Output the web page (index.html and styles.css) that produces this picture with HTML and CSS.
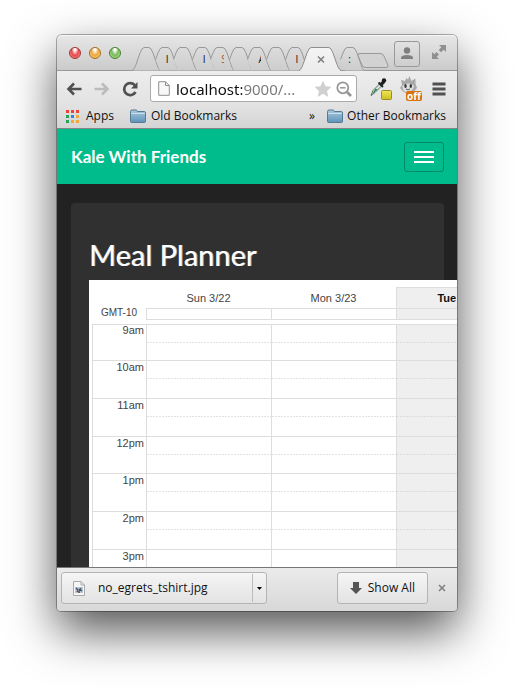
FILE: index.html
```html
<!DOCTYPE html>
<html lang="en">
<head>
<meta charset="utf-8">
<title>Kale With Friends</title>
<link rel="stylesheet" href="styles.css">
</head>
<body>
<svg class="defs" aria-hidden="true">
  <defs>
    <linearGradient id="folderFill" x1="0" y1="0" x2="0" y2="1"><stop offset="0" stop-color="#a9c9de"/><stop offset="1" stop-color="#5d93b8"/></linearGradient>
    <linearGradient id="tabFill" x1="0" y1="0" x2="0" y2="1"><stop offset="0" stop-color="#dcdcdc"/><stop offset="1" stop-color="#cdcdcd"/></linearGradient>
    <linearGradient id="yellow" x1="0" y1="0" x2="0" y2="1"><stop offset="0" stop-color="#efe75a"/><stop offset="1" stop-color="#cdbf1d"/></linearGradient>
    <linearGradient id="activeFill" x1="0" y1="0" x2="0" y2="1"><stop offset="0" stop-color="#f4f4f4"/><stop offset="1" stop-color="#ececec"/></linearGradient>
    <symbol id="tabFirst" viewBox="0 0 28 25"><path d="M0 24.500C2 24 3 21 4 18.500L8 7Q10 1.500 12 1.500H17Q19 1.500 21 7L25 18.500Q26.500 23.500 28 24.500Z" fill="url(#tabFill)"/><path d="M0 24.500C2 24 3 21 4 18.500L8 7Q10 1.500 12 1.500H17Q19 1.500 21 7L25 18.500Q26.500 23.500 28 24.500" fill="none" stroke="#999"/></symbol>
    <symbol id="tabNext" viewBox="0 0 28 25"><path d="M4.500 13.500L7 7Q9 1.500 11 1.500H17Q19 1.500 21 7L25 18.500Q26.500 23.500 28 24.500H9Z" fill="url(#tabFill)"/><path d="M4.500 13.500L7 7Q9 1.500 11 1.500H17Q19 1.500 21 7L25 18.500Q26.500 23.500 28 24.500" fill="none" stroke="#999"/></symbol>
    <symbol id="folder" viewBox="0 0 16 14"><path d="M.5 12.500V2.500Q.5 1 2 1H6Q7 1 7.300 2.500H14.500Q15.500 2.500 15.500 4V12.500Q15.500 13.500 14.500 13.500H1.500Q.5 13.500 .5 12.500Z" fill="url(#folderFill)" stroke="#547b96"/><path d="M1 4.500H15" stroke="#c8deeb"/></symbol>
  </defs>
</svg>

<div class="window">
  <header class="titlebar">
    <div class="lights">
      <button class="light red" aria-label="Close window"></button>
      <button class="light amber" aria-label="Minimise window"></button>
      <button class="light green" aria-label="Zoom window"></button>
    </div>
    <nav class="tabs" aria-label="Tabs">
      <button class="tab" aria-label="Tab 1"><svg class="shape"><use href="#tabFirst"/></svg></button>
      <button class="tab"><svg class="shape"><use href="#tabNext"/></svg><span class="label">I</span></button>
      <button class="tab" aria-label="Tab 3"><svg class="shape"><use href="#tabNext"/></svg></button>
      <button class="tab"><svg class="shape"><use href="#tabNext"/></svg><span class="label">I</span></button>
      <button class="tab"><svg class="shape"><use href="#tabNext"/></svg><span class="label warm">S</span></button>
      <button class="tab" aria-label="Tab 6"><svg class="shape"><use href="#tabNext"/></svg></button>
      <button class="tab"><svg class="shape"><use href="#tabNext"/></svg><span class="label">A</span></button>
      <button class="tab" aria-label="Tab 8"><svg class="shape"><use href="#tabNext"/></svg></button>
      <button class="tab"><svg class="shape"><use href="#tabNext"/></svg><span class="label">I</span></button>
      <button class="tab active" aria-label="Close tab">
        <svg class="shape" viewBox="0 0 42 26"><path d="M0 25C2 24 3 21 4 18.500L8 7Q10 1.500 12 1.500H30Q32 1.500 34 7L38 18.500Q39.500 23.500 42 25V26H0Z" fill="url(#activeFill)"/><path d="M0 24.500C2 24 3 21 4 18.500L8 7Q10 1.500 12 1.500H30Q32 1.500 34 7L38 18.500Q39.500 23.500 42 24.500" fill="none" stroke="#8e8e8e"/><path d="M19 10.500L25 16.500M25 10.500L19 16.500" stroke="#808080" stroke-width="1.600"/></svg>
      </button>
      <button class="tab last"><svg class="shape"><use href="#tabNext"/></svg><span class="label">:</span></button>
    </nav>
    <button class="newtab" aria-label="New tab"><svg width="32" height="17" viewBox="0 0 32 17"><path d="M3 1.500H23Q26 1.500 27 4L31 13.500Q31.500 15.500 29 15.500H9Q6 15.500 5 13L1 3.500Q.5 1.500 3 1.500Z" fill="#d2d2d2" stroke="#999"/></svg></button>
    <button class="profile" aria-label="Profile"><svg width="14" height="13" viewBox="0 0 14 13"><circle cx="7" cy="3.500" r="3.200" fill="#808080"/><path d="M1 12V10.500Q1.500 8 7 8T13 10.500V12Z" fill="#808080"/></svg></button>
    <button class="expand" aria-label="Full screen"><svg width="16" height="16" viewBox="0 0 16 16" fill="#909090"><path d="M8 1H15V8L12.700 5.700L10 8.300L7.700 6L10.300 3.300Z"/><path d="M1 8V15H8L5.700 12.700L8 10.500L5.500 8L3.300 10.300Z"/></svg></button>
  </header>

  <div class="toolbar">
    <button class="tool" aria-label="Back"><svg width="16" height="16" viewBox="0 0 16 16"><path d="M8 2.500L2.500 8L8 13.500M2.500 8H15.500" fill="none" stroke="#505050" stroke-width="2.600"/></svg></button>
    <button class="tool" aria-label="Forward"><svg width="16" height="16" viewBox="0 0 16 16"><path d="M8 2.500L13.500 8L8 13.500M13.500 8H.5" fill="none" stroke="#bcbcbc" stroke-width="2.600"/></svg></button>
    <button class="tool" aria-label="Reload"><svg width="16" height="16" viewBox="0 0 16 16"><path d="M13 4.500A6 6 0 1 0 13.500 11" fill="none" stroke="#505050" stroke-width="2.700"/><path d="M15.500 1V7.500H9Z" fill="#505050"/></svg></button>
    <div class="omnibox">
      <svg width="12" height="15" viewBox="0 0 12 15"><path d="M.7 .7H7.500L11.300 4.500V14.300H.7Z" fill="#f8f8f8" stroke="#909090"/><path d="M7.500 .7V4.500H11.300" fill="none" stroke="#909090"/></svg>
      <input class="address" aria-label="Address" value="localhost:9000/...">
      <button class="plain" aria-label="Bookmark this page"><svg width="18" height="18" viewBox="0 0 18 18"><path d="M9 .5L11.500 6.300L17.500 6.800L13 11L14.300 17L9 13.800L3.700 17L5 11L.5 6.800L6.500 6.300Z" fill="#d0d0d0"/></svg></button>
      <button class="plain" aria-label="Zoom"><svg width="16" height="16" viewBox="0 0 16 16"><circle cx="6.800" cy="6.800" r="5.500" fill="none" stroke="#969696" stroke-width="1.800"/><path d="M4 6.800H9.600" stroke="#969696" stroke-width="1.500"/><path d="M11 11L15 15" stroke="#969696" stroke-width="2.600"/></svg></button>
    </div>
    <button class="ext" aria-label="Colour picker"><svg width="22" height="24" viewBox="0 0 22 24"><path d="M1 18.500L3 13.500L9.500 7L11.500 9L5 15.500Z" fill="#d5ebdf" stroke="#31543f" stroke-width=".8"/><path d="M2.500 16.500L5.500 11.500L7.500 12.500L4.500 15.500Z" fill="#3c8a60"/><path d="M8.500 5.500L13 10" stroke="#222" stroke-width="1.800"/><path d="M10.500 8L14 4.500" stroke="#222" stroke-width="3.200"/><circle cx="14" cy="3.500" r="2.200" fill="#1b1b1b"/><rect x="11.500" y="13.500" width="10" height="9" rx="1" fill="url(#yellow)" stroke="#99902a"/></svg></button>
    <button class="ext cat" aria-label="Blocker"><svg width="17" height="19" viewBox="0 0 17 19"><path d="M1 4L5 5L6.500 2L8 3.500L9.500 0L11.500 5L15.500 2.500V8L17 12L13 16.500L8 18L3 15.500L0 12L2 9Z" fill="#a9a9a9"/><path d="M2.500 10Q8 5.500 14 9.500Q13.500 15 8 16T2.500 10Z" fill="#dedede"/><ellipse cx="5.500" cy="10" rx="1.200" ry="1.900" fill="#333"/><ellipse cx="10.800" cy="10" rx="1.200" ry="1.900" fill="#333"/><path d="M6 13Q8 14.500 10 13" fill="none" stroke="#666"/></svg><span class="badge">off</span></button>
    <button class="menu" aria-label="Menu"><svg width="14" height="14" viewBox="0 0 14 14"><path d="M.5 2H13.500M.5 7H13.500M.5 12H13.500" stroke="#505050" stroke-width="2.800"/></svg></button>
  </div>

  <nav class="bookmarks" aria-label="Bookmarks">
    <a class="mark apps" href="#apps"><svg width="13" height="13" viewBox="0 0 13 13"><path d="M0 0H3V3H0ZM5 0H8V3H5ZM10 0H13V3H10Z" fill="#ef4136"/><path d="M0 5H3V8H0Z" fill="#25a35a"/><path d="M5 5H8V8H5Z" fill="#2a86e0"/><path d="M10 5H13V8H10ZM5 10H8V13H5ZM10 10H13V13H10Z" fill="#f5a83a"/><path d="M0 10H3V13H0Z" fill="#25a35a"/></svg>Apps</a>
    <a class="mark old" href="#old"><svg width="16" height="14"><use href="#folder"/></svg>Old Bookmarks</a>
    <button class="more" aria-label="More bookmarks">»</button>
    <a class="mark other" href="#other"><svg width="16" height="14"><use href="#folder"/></svg>Other Bookmarks</a>
  </nav>

  <main class="page">
    <div class="navbar">
      <a class="brand" href="#home">Kale With Friends</a>
      <button class="toggler" aria-label="Toggle navigation"><span class="bar"></span><span class="bar"></span><span class="bar"></span></button>
    </div>
    <section class="well">
      <h1>Meal Planner</h1>
      <div class="calendar">
        <table>
          <colgroup><col class="hours"><col class="day"><col class="day"><col class="day"></colgroup>
          <thead>
            <tr class="days"><td></td><th scope="col">Sun 3/22</th><th scope="col">Mon 3/23</th><th class="today" scope="col">Tue 3/24</th></tr>
            <tr class="allday"><th scope="row">GMT-10</th><td></td><td></td><td class="today"></td></tr>
            <tr class="gap"><td colspan="4"></td></tr>
          </thead>
          <tbody>
            <tr><th scope="row">9am</th><td></td><td></td><td class="today"></td></tr>
            <tr><th scope="row">10am</th><td></td><td></td><td class="today"></td></tr>
            <tr><th scope="row">11am</th><td></td><td></td><td class="today"></td></tr>
            <tr><th scope="row">12pm</th><td></td><td></td><td class="today"></td></tr>
            <tr><th scope="row">1pm</th><td></td><td></td><td class="today"></td></tr>
            <tr><th scope="row">2pm</th><td></td><td></td><td class="today"></td></tr>
            <tr><th scope="row">3pm</th><td></td><td></td><td class="today"></td></tr>
          </tbody>
        </table>
      </div>
    </section>
  </main>

  <footer class="shelf">
    <div class="download">
      <button class="file"><svg width="12" height="15" viewBox="0 0 12 15"><path d="M.5 .5H8L11.500 4V14.500H.5Z" fill="#f6f6f6" stroke="#aaa"/><path d="M8 .5V4H11.500" fill="none" stroke="#aaa"/><path d="M2 6H10V12H2Z" fill="#b9c7d6"/><path d="M3 7L5 9L4 11M6 8L9 10M8 7L6 11" stroke="#3d5069" stroke-width="1.300" fill="none"/><path d="M5 10H7V12H5Z" fill="#8b5d49"/></svg>no_egrets_tshirt.jpg</button>
      <button class="drop" aria-label="Download options"><svg width="5" height="3" viewBox="0 0 5 3"><path d="M0 0H5L2.500 3Z"/></svg></button>
    </div>
    <button class="showall"><svg width="12" height="12" viewBox="0 0 12 12"><path d="M3 0H9V6H12L6 12L0 6H3Z" fill="#555"/></svg>Show All</button>
    <button class="plain" aria-label="Close downloads"><svg width="8" height="8" viewBox="0 0 8 8"><path d="M1 1L7 7M7 1L1 7" stroke="#808080" stroke-width="1.600"/></svg></button>
  </footer>
</div>
</body>
</html>
```
FILE: styles.css
```css
* { box-sizing: border-box; }

body {
  display: flex;
  height: 100vh;
  margin: 0;
  padding: 35px 57px 79px;
  overflow: hidden;
  background: #fff;
  color: #111;
  font: 12px/16px "Open Sans", "Noto Sans", sans-serif;
}

button {
  margin: 0;
  padding: 0;
  border: 0;
  background: none;
  color: inherit;
  font: inherit;
}

svg { display: block; flex: none; }
a { color: inherit; text-decoration: none; }
.defs { position: absolute; width: 0; height: 0; }

.window {
  display: flex;
  flex: 1;
  flex-direction: column;
  min-width: 0;
  border-radius: 5px 5px 4px 4px;
  background: #dcdcdc;
  box-shadow: 0 0 0 1px rgba(0, 0, 0, .3), 0 20px 48px rgba(0, 0, 0, .68);
}

/* Title bar and tabs */
.titlebar {
  display: flex;
  flex: none;
  align-items: center;
  height: 36px;
  padding: 0 10px 0 12px;
  border-top: 1px solid #f6f6f6;
  border-bottom: 1px solid #999;
  border-radius: 5px 5px 0 0;
  background: linear-gradient(#e6e6e6, #cbcbcb);
}

.lights { display: flex; gap: 8px; width: 67px; }
.light { width: 12px; height: 12px; border: 1px solid; border-radius: 50%; }
.red { border-color: #9c3734; background: radial-gradient(ellipse at 50% 15%, #fff 0 10%, #e8474a 50%, #ffa09c); }
.amber { border-color: #a06b22; background: radial-gradient(ellipse at 50% 15%, #fff 0 10%, #eea53c 50%, #ffe890); }
.green { border-color: #4a7d36; background: radial-gradient(ellipse at 50% 15%, #fff 0 10%, #75b95a 50%, #cff5a0); }

.tabs { display: flex; flex: 1; align-self: flex-end; height: 25px; margin-bottom: -1px; }
.tab { position: relative; flex: 1; min-width: 0; }
.tab .shape { position: absolute; top: 0; left: -4px; width: 28px; height: 25px; }
.tab .label {
  position: absolute;
  top: 5px;
  left: 11px;
  width: 3px;
  overflow: hidden;
  font-size: 10px;
}
.tab .warm { color: #a85f13; }
.tab.active { z-index: 1; flex: 0 0 37px; }
.tab.active .shape { width: 42px; height: 26px; }
.tab.last { flex: 0 0 17px; }
.tab.last .label { left: 8px; }

.newtab { z-index: 1; margin-top: 14px; }
.profile {
  display: grid;
  place-items: center;
  width: 26px;
  height: 26px;
  margin: 1px 11px 0 5px;
  border: 1px solid #999;
  border-radius: 3px;
}
.expand { margin-bottom: 2px; }

/* Toolbar */
.toolbar {
  display: flex;
  flex: none;
  align-items: center;
  height: 35px;
  padding: 0 11px 0 9px;
  background: linear-gradient(#ededed, #e2e2e2);
}
.tool { width: 28px; }
.omnibox {
  display: flex;
  flex: 1;
  align-items: center;
  gap: 4px;
  min-width: 0;
  height: 27px;
  padding: 0 4px 0 7px;
  border: 1px solid #aaa;
  border-radius: 3px;
  background: #fff;
}
.address {
  flex: 1;
  min-width: 0;
  height: 24px;
  padding: 0;
  border: 0;
  outline: 0;
  background: linear-gradient(90deg, #111 66px, #777 66px);
  background-clip: text;
  -webkit-background-clip: text;
  color: transparent;
  font: 15px/24px "Noto Sans", "Open Sans", sans-serif;
}
.address, .showall { margin-left: 2px; }
.ext { position: relative; width: 22px; height: 26px; margin-left: 13px; }
.cat { margin-left: 8px; }
.cat svg { margin-bottom: 6px; }
.badge {
  position: absolute;
  right: 0;
  bottom: 1px;
  padding: 0 1px;
  border-radius: 2px;
  background: #d9730d;
  color: #fff;
  font-size: 10px;
  font-weight: 700;
  line-height: 10px;
}
.menu { margin-left: 10px; }

/* Bookmarks bar */
.bookmarks {
  display: flex;
  flex: none;
  align-items: center;
  height: 23px;
  padding: 0 11px 2px 9px;
  border-bottom: 1px solid #858585;
  background: linear-gradient(#e2e2e2, #d4d4d4);
}
.mark { display: flex; align-items: center; gap: 5px; white-space: nowrap; }
.apps { gap: 7px; }
.old { margin-left: 16px; }
.other { gap: 4px; }
.more { margin: 0 12px 0 auto; }

/* Page */
.page {
  flex: 1;
  min-height: 0;
  overflow: hidden;
  background: #222;
  font-family: Lato, sans-serif;
}
.navbar {
  display: flex;
  align-items: center;
  justify-content: space-between;
  height: 55px;
  padding: 0 13px 0 14px;
  background: #00bc8c;
  color: #fff;
}
.brand { font-size: 17px; font-weight: 700; line-height: 24px; }
.toggler {
  display: flex;
  flex-direction: column;
  align-items: center;
  justify-content: center;
  gap: 3px;
  width: 40px;
  height: 30px;
  border: 1px solid #008966;
  border-radius: 3px;
}
.bar { width: 20px; height: 2px; background: #fff; }

.well {
  margin: 19px 13px 19px 14px;
  padding: 34px 18px 18px;
  border-radius: 4px;
  background: #303030;
}
h1 {
  margin: 0;
  padding-bottom: 7px;
  color: #fff;
  font-size: 29px;
  font-weight: 400;
  line-height: 36px;
  text-shadow: 1px 0 0 rgba(255, 255, 255, .6);
}

/* Calendar */
.calendar {
  width: 440px;
  padding: 7px 3px 0;
  background: #fff;
  color: #444;
  font: 11px/12px "Liberation Sans", Arial, sans-serif;
}
table { width: 429px; table-layout: fixed; border-spacing: 0; }
.hours { width: 54px; }
.day { width: 125px; }
th, td { padding: 0; font-weight: 400; }
td.today, th.today { background: #efefef; }
.days { height: 21px; }
.days .today { border-top: 1px solid #ddd; border-left: 1px solid #ddd; color: #111; font-weight: 700; }
.allday { height: 12px; }
.allday th { font-size: 10px; line-height: 10px; vertical-align: top; }
.allday td { border: solid #ddd; border-width: 1px 0 1px 1px; }
.gap { height: 4px; }
tbody tr { height: 38px; }
tbody tr:first-child { height: 36px; }
tbody tr:nth-child(4) { height: 37px; }
tbody th {
  padding-right: 2px;
  border: solid #ddd;
  border-width: 1px 0 0 1px;
  text-align: right;
  vertical-align: top;
  line-height: 12px;
}
tbody tr:first-child th { line-height: 10px; }
tbody td {
  border: solid #ddd;
  border-width: 1px 0 0 1px;
  background: repeating-linear-gradient(90deg, #e2e2e2 0 2px, transparent 2px 3px) 0 17px / 100% 1px no-repeat;
}
tbody td.today { background: repeating-linear-gradient(90deg, #dcdcdc 0 2px, transparent 2px 3px) 0 17px / 100% 1px no-repeat #efefef; }

/* Download shelf */
.shelf {
  display: flex;
  flex: none;
  align-items: center;
  height: 44px;
  padding: 0 11px 3px 4px;
  border-top: 1px solid #777;
  border-radius: 0 0 4px 4px;
  background: linear-gradient(#ebebeb, #d8d8d8);
}
.download, .showall {
  display: flex;
  align-items: center;
  height: 32px;
  border: 1px solid #b4b4b4;
  border-radius: 3px;
  background: linear-gradient(#f5f5f5, #e3e3e3);
}
.file { display: flex; align-items: center; gap: 13px; width: 190px; height: 28px; padding-left: 11px; }
.drop { display: grid; place-items: center; width: 14px; height: 28px; border-left: 1px solid #bbb; }
.showall { gap: 6px; margin-right: 10px; margin-left: auto; padding: 0 12px; }
```
